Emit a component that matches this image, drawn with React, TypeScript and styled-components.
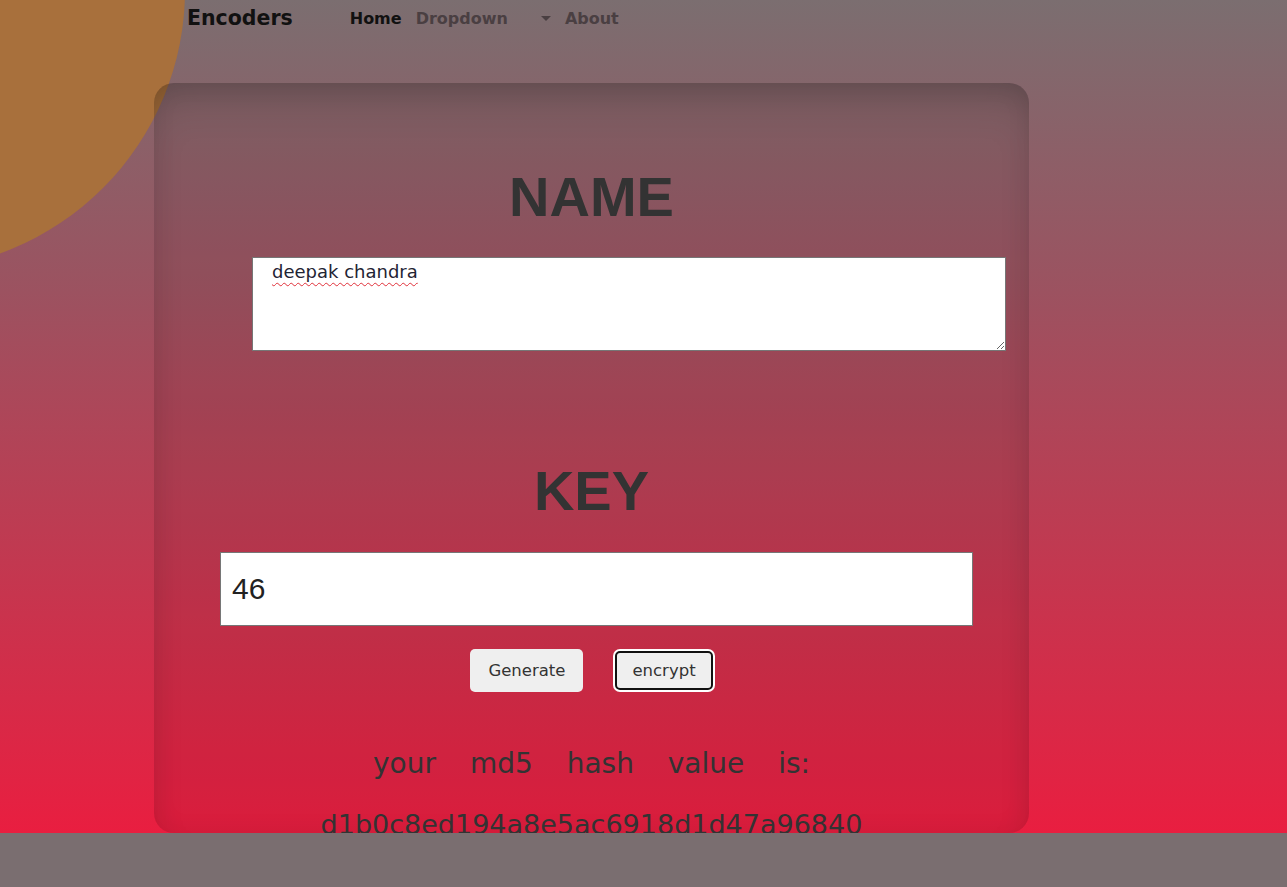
import styled, { createGlobalStyle } from 'styled-components';

const GlobalStyle = createGlobalStyle`
  body {
    margin: 0;
    background: #7a6e70;
    font-family: 'DejaVu Sans', 'Liberation Sans', sans-serif;
    color: #333;
  }
`;

export default function App() {
  return (
    <>
      <GlobalStyle />
      <Hero>
        <Blob />
        <Navbar>
          <Brand>Encoders</Brand>
          <NavLink $active>Home</NavLink>
          <NavLink>Dropdown</NavLink>
          <Caret />
          <NavLink>About</NavLink>
        </Navbar>

        <Card>
          <Heading>NAME</Heading>
          <NameArea defaultValue='deepak chandra' spellCheck={false} />

          <Heading $top={112}>KEY</Heading>
          <KeyInput defaultValue='46' />

          <Buttons>
            <Button>Generate</Button>
            <Button $focused>encrypt</Button>
          </Buttons>

          <Result>your md5 hash value is:</Result>
          <Hash>d1b0c8ed194a8e5ac6918d1d47a96840</Hash>
        </Card>
      </Hero>
    </>
  );
}

const Hero = styled.section`
  position: relative;
  height: 833px;
  background: linear-gradient(180deg, #7b6e70 0%, #9c5260 35%, #e91e40 100%);
`;

const Blob = styled.div`
  position: absolute;
  left: -375px;
  top: -290px;
  width: 560px;
  height: 560px;
  border-radius: 50%;
  background: #a8703c;
`;

const Navbar = styled.nav`
  position: relative;
  display: flex;
  align-items: center;
  height: 36px;
  padding-left: 187px;
`;

const Brand = styled.div`
  font-weight: bold;
  font-size: 20.5px;
  color: #111;
  margin-right: 57px;
`;

const NavLink = styled.a<{ $active?: boolean }>`
  font-weight: bold;
  font-size: 16px;
  color: ${(p) => (p.$active ? '#111' : '#4a3f42')};
  margin-right: 14px;
  cursor: pointer;
`;

const Caret = styled.span`
  width: 0;
  height: 0;
  margin: 1px 14px 0 19px;
  border-left: 5px solid transparent;
  border-right: 5px solid transparent;
  border-top: 5px solid #4a3f42;
`;

const Card = styled.div`
  position: relative;
  display: flex;
  flex-direction: column;
  align-items: center;
  box-sizing: border-box;
  width: 875px;
  height: 750px;
  margin: 47px 0 0 154px;
  padding-top: 86px;
  border-radius: 20px;
  background: rgba(0, 0, 0, 0.06);
  box-shadow: inset 0 28px 45px -18px rgba(0, 0, 0, 0.22),
    inset 0 0 24px rgba(0, 0, 0, 0.07);

  & > * {
    flex-shrink: 0;
  }
`;

const Heading = styled.h1<{ $top?: number }>`
  margin: ${(p) => p.$top ?? 0}px 0 0;
  font-family: 'Liberation Sans', Arial, sans-serif;
  font-weight: bold;
  font-size: 56px;
  line-height: 1;
  color: #333;
`;

const NameArea = styled.textarea`
  box-sizing: border-box;
  align-self: flex-start;
  width: 754px;
  height: 94px;
  margin: 32px 0 0 98px;
  padding: 3px 19px;
  border: 1px solid #767676;
  background: #fff;
  font-family: 'DejaVu Sans', sans-serif;
  font-size: 18px;
  color: #1f2433;
  text-decoration: underline wavy #e0303a 1px;
  text-underline-offset: 4px;
  outline: none;
`;

const KeyInput = styled.input`
  box-sizing: border-box;
  align-self: flex-start;
  width: 753px;
  height: 74px;
  margin: 33px 0 0 66px;
  padding: 0 11px;
  border: 1px solid #767676;
  background: #fff;
  font-family: 'Liberation Sans', Arial, sans-serif;
  font-size: 30px;
  color: #222;
  outline: none;
`;

const Buttons = styled.div`
  display: flex;
  gap: 30px;
  margin-top: 23px;
`;

const Button = styled.button<{ $focused?: boolean }>`
  box-sizing: border-box;
  height: 43px;
  padding: 0 ${(p) => (p.$focused ? 15 : 18)}px;
  border: ${(p) => (p.$focused ? '2px solid #111' : 'none')};
  border-radius: 5px;
  background: #efefef;
  box-shadow: ${(p) => (p.$focused ? '0 0 0 2px #fff' : 'none')};
  font-family: 'DejaVu Sans', sans-serif;
  font-size: 16.5px;
  color: #333;
  ${(p) => (p.$focused ? 'height: 39px; margin-top: 2px; margin-left: 2px;' : '')}
`;

const Result = styled.p`
  margin: 41px 0 0;
  line-height: 61px;
  font-size: 28px;
  word-spacing: 25px;
  color: #333;
`;

const Hash = styled.p`
  margin: 0;
  line-height: 61px;
  font-size: 27px;
  color: #333;
`;
